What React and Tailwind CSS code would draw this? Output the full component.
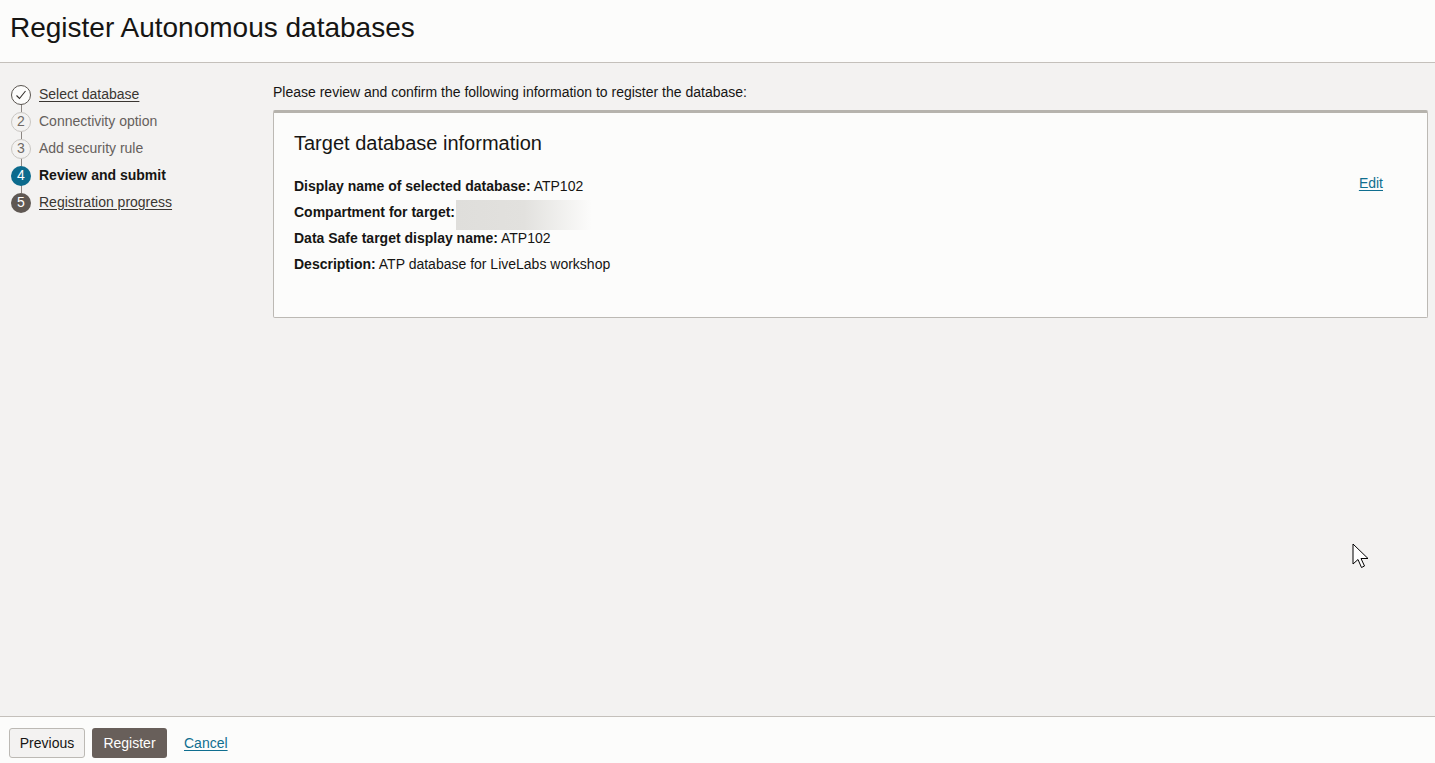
import React from "react";

const steps = [
  { n: 1, label: "Select database", state: "done" },
  { n: 2, label: "Connectivity option", state: "todo" },
  { n: 3, label: "Add security rule", state: "todo" },
  { n: 4, label: "Review and submit", state: "current" },
  { n: 5, label: "Registration progress", state: "visited" },
];

function StepCircle({ step }) {
  if (step.state === "done") {
    return (
      <div className="relative z-10 flex h-[20px] w-[20px] items-center justify-center rounded-full border border-[#5a5550] bg-[#fcfcfb]">
        <svg width="14" height="14" viewBox="0 0 14 14" fill="none">
          <path d="M2.5 7.5 L5.5 10.5 L11.5 3" stroke="#312d2a" strokeWidth="1.1" />
        </svg>
      </div>
    );
  }
  if (step.state === "todo") {
    return (
      <div className="relative z-10 flex h-[20px] w-[20px] items-center justify-center rounded-full border border-[#c9c6c2] bg-[#f3f2f1] text-[14px] text-[#6f6a66]">
        {step.n}
      </div>
    );
  }
  const bg = step.state === "current" ? "bg-[#0c6b8d]" : "bg-[#5f5853]";
  return (
    <div className={`relative z-10 flex h-[20px] w-[20px] items-center justify-center rounded-full text-[14px] text-white ${bg}`}>
      {step.n}
    </div>
  );
}

function Row({ label, children }) {
  return (
    <div className="relative h-[26px] text-[14px] leading-[26px]">
      <span className="font-bold">{label}</span> {children}
    </div>
  );
}

export default function App() {
  return (
    <div
      className="flex h-[763px] flex-col bg-[#f3f2f1] text-[#161513]"
      style={{ fontFamily: '"Liberation Sans", Arial, sans-serif' }}
    >
      <div className="flex h-[63px] shrink-0 items-center border-b border-[#c4c0bb] bg-[#fcfcfb] px-[10px] pb-[6px]">
        <h1 className="text-[28px] leading-none text-[#161513]">Register Autonomous databases</h1>
      </div>

      <div className="flex min-h-0 flex-1">
        <div className="w-[273px] shrink-0 pl-[11px] pt-[18px]">
          {steps.map((s, i) => (
            <div key={s.n} className="relative flex h-[27px] items-center">
              {i > 0 && (
                <div className="absolute left-[10px] top-[-4px] h-[8px] w-px bg-[#8b8682]" />
              )}
              <StepCircle step={s} />
              <span
                className={`ml-[8px] text-[14px] ${
                  s.state === "current"
                    ? "font-bold text-[#161513]"
                    : s.state === "todo"
                    ? "text-[#65605c]"
                    : "text-[#3a3632] underline underline-offset-2"
                }`}
              >
                {s.label}
              </span>
            </div>
          ))}
        </div>

        <div className="flex-1 pr-[7px] pt-[21px]">
          <p className="text-[14px] leading-[16px]">
            Please review and confirm the following information to register the database:
          </p>
          <div className="mt-[10px] flex h-[208px] rounded-[2px] border border-t-[3px] border-[#bcb9b4] border-t-[#b6b3ad] bg-[#fcfcfb] pl-[20px] pr-[44px] pt-[18px]">
            <div className="flex-1">
              <h2 className="text-[20px] leading-[24px]">Target database information</h2>
              <div className="mt-[18px]">
                <Row label="Display name of selected database:">ATP102</Row>
                <Row label="Compartment for target:">
                  <span className="absolute left-[162px] top-[1px] h-[30px] w-[136px] bg-gradient-to-r from-[#dfdedb] via-[#e2e1de] to-[#fcfcfb]" />
                </Row>
                <Row label="Data Safe target display name:">ATP102</Row>
                <Row label="Description:">ATP database for LiveLabs workshop</Row>
              </div>
            </div>
            <a href="#" className="mt-[44px] h-[16px] text-[14px] leading-[16px] text-[#0f6e8f] underline underline-offset-2">
              Edit
            </a>
          </div>
        </div>
      </div>

      <div className="flex h-[47px] shrink-0 items-start gap-[7px] border-t border-[#c4c0bb] bg-[#fcfcfb] px-[9px] pt-[11px]">
        <button className="h-[30px] w-[76px] rounded-[3px] border border-[#bcb9b4] bg-[#f3f2f1] text-[14px] text-[#161513]">
          Previous
        </button>
        <button className="h-[30px] w-[75px] rounded-[3px] bg-[#685f5a] text-[14px] text-white">
          Register
        </button>
        <a href="#" className="ml-[10px] mt-[7px] text-[14px] leading-[16px] text-[#0f6e8f] underline underline-offset-2">
          Cancel
        </a>
      </div>

      <svg className="absolute left-[1352px] top-[543px]" width="20" height="28" viewBox="0 0 20 28">
        <path d="M1 1 L1 21 L6 16.5 L9.5 24.5 L12.5 23 L9 15.5 L16 15.5 Z" fill="#fff" stroke="#000" strokeWidth="1" />
      </svg>
    </div>
  );
}
